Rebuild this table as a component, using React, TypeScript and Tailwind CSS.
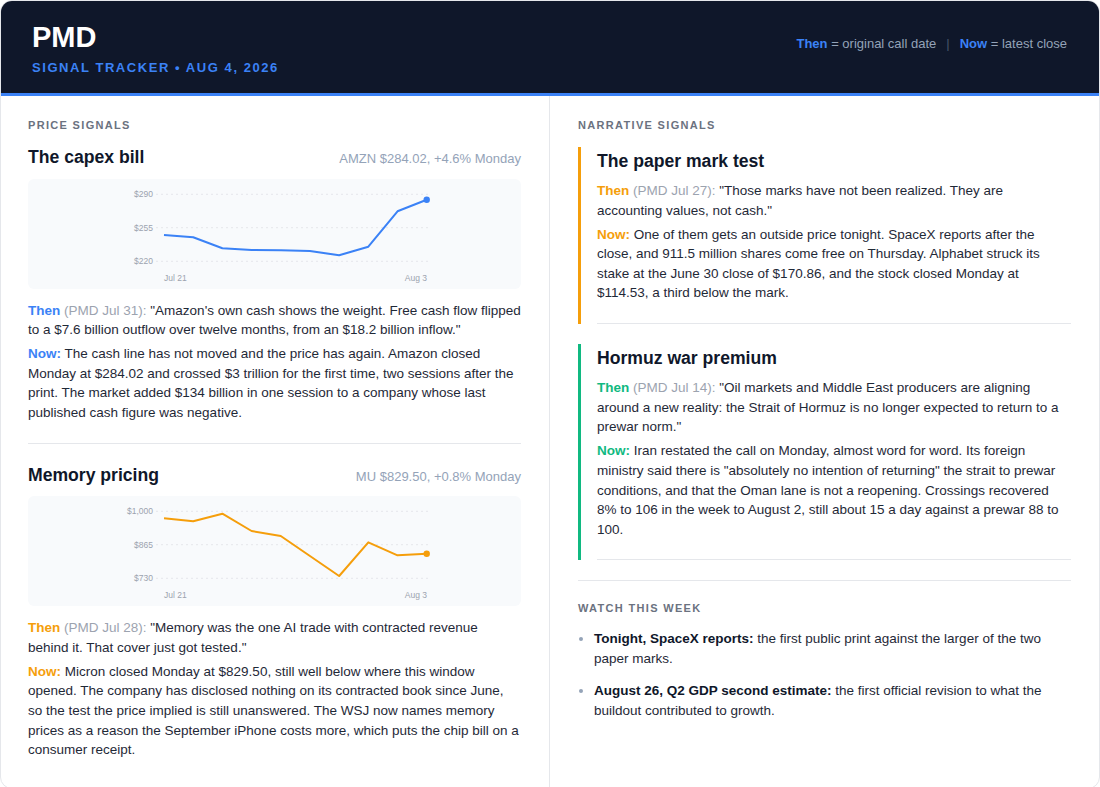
import React from 'react';

type Signal = {
  title: string;
  meta: string;
  color: string;
  thenDate: string;
  thenText: string;
  nowText: string;
  yLabels: string[];
  ys: number[];
};

const price: Signal[] = [
  {
    title: 'The capex bill',
    meta: 'AMZN $284.02, +4.6% Monday',
    color: '#3b82f6',
    thenDate: '(PMD Jul 31):',
    thenText:
      '"Amazon\'s own cash shows the weight. Free cash flow flipped to a $7.6 billion outflow over twelve months, from an $18.2 billion inflow."',
    nowText:
      'The cash line has not moved and the price has again. Amazon closed Monday at $284.02 and crossed $3 trillion for the first time, two sessions after the print. The market added $134 billion in one session to a company whose last published cash figure was negative.',
    yLabels: ['$290', '$255', '$220'],
    ys: [56, 58.3, 69.3, 71, 71.3, 72, 76.3, 67.7, 32.3, 20.7],
  },
  {
    title: 'Memory pricing',
    meta: 'MU $829.50, +0.8% Monday',
    color: '#f59e0b',
    thenDate: '(PMD Jul 28):',
    thenText: '"Memory was the one AI trade with contracted revenue behind it. That cover just got tested."',
    nowText:
      'Micron closed Monday at $829.50, still well below where this window opened. The company has disclosed nothing on its contracted book since June, so the test the price implied is still unanswered. The WSJ now names memory prices as a reason the September iPhone costs more, which puts the chip bill on a consumer receipt.',
    yLabels: ['$1,000', '$865', '$730'],
    ys: [22.3, 25.3, 17.7, 35, 40, 60, 80, 46.3, 59.3, 57.7],
  },
];

const narrative = [
  {
    title: 'The paper mark test',
    color: '#f59e0b',
    border: 'border-[#f59e0b]',
    thenDate: '(PMD Jul 27):',
    thenText: '"Those marks have not been realized. They are accounting values, not cash."',
    nowText:
      'One of them gets an outside price tonight. SpaceX reports after the close, and 911.5 million shares come free on Thursday. Alphabet struck its stake at the June 30 close of $170.86, and the stock closed Monday at $114.53, a third below the mark.',
  },
  {
    title: 'Hormuz war premium',
    color: '#10b981',
    border: 'border-[#10b981]',
    thenDate: '(PMD Jul 14):',
    thenText:
      '"Oil markets and Middle East producers are aligning around a new reality: the Strait of Hormuz is no longer expected to return to a prewar norm."',
    nowText:
      'Iran restated the call on Monday, almost word for word. Its foreign ministry said there is "absolutely no intention of returning" the strait to prewar conditions, and that the Oman lane is not a reopening. Crossings recovered 8% to 106 in the week to August 2, still about 15 a day against a prewar 88 to 100.',
  },
];

function Chart({ ys, color, yLabels }: { ys: number[]; color: string; yLabels: string[] }) {
  const xs = ys.map((_, i) => 136 + i * 29.19);
  const pts = ys.map((y, i) => `${xs[i]},${y}`).join(' ');
  const grid = [15.3, 48.7, 82.3];
  return (
    <div className="mt-2.5 h-[110px] rounded-md bg-[#f8fafc]">
      <svg width="100%" height="110" viewBox="0 0 493 110">
        {grid.map((g, i) => (
          <g key={i}>
            <line x1="128" x2="402" y1={g} y2={g} stroke="#e5e7eb" strokeWidth="1" strokeDasharray="2 3" />
            <text x="125" y={g + 3} textAnchor="end" fontSize="8.5" fill="#9ca3af">
              {yLabels[i]}
            </text>
          </g>
        ))}
        <polyline points={pts} fill="none" stroke={color} strokeWidth="2" strokeLinejoin="round" />
        <circle cx={xs[xs.length - 1]} cy={ys[ys.length - 1]} r="3.2" fill={color} />
        <text x="136" y="102" fontSize="8.5" fill="#9ca3af">Jul 21</text>
        <text x="399" y="102" textAnchor="end" fontSize="8.5" fill="#9ca3af">Aug 3</text>
      </svg>
    </div>
  );
}

function ThenNow({ color, thenDate, thenText, nowText }: { color: string; thenDate: string; thenText: string; nowText: string }) {
  return (
    <div className="text-[13.5px] leading-[19.6px] text-[#1f2937]">
      <p>
        <span className="font-bold" style={{ color }}>Then</span>{' '}
        <span className="text-[#9ca3af]">{thenDate}</span> {thenText}
      </p>
      <p className="mt-[4.5px]">
        <span className="font-bold" style={{ color }}>Now:</span> {nowText}
      </p>
    </div>
  );
}

export default function App() {
  return (
    <div className="min-h-screen bg-white font-['Liberation_Sans',Arial,sans-serif]">
      <div className="overflow-hidden rounded-xl border border-gray-200 bg-white">
        {/* Header */}
        <header className="flex items-start justify-between border-b-[3px] border-[#3b82f6] bg-[#0f172a] pl-[31px] pr-8 pt-5 pb-[17px]">
          <div>
            <h1 className="text-[29px] font-bold leading-[33px] text-white">PMD</h1>
            <p className="mt-1.5 text-[13px] font-bold uppercase leading-4 tracking-[0.12em] text-[#3b82f6]">
              Signal Tracker • Aug 4, 2026
            </p>
          </div>
          <p className="mt-[13px] text-[13px] leading-5 text-[#94a3b8]">
            <span className="font-bold text-[#3b82f6]">Then</span> = original call date
            <span className="mx-2.5 text-[#475569]">|</span>
            <span className="font-bold text-[#3b82f6]">Now</span> = latest close
          </p>
        </header>

        <div className="grid grid-cols-2">
          {/* Price signals */}
          <section className="border-r border-gray-200 pl-[27px] pr-7 pt-[21px] pb-7">
            <h2 className="mb-[13px] text-[11px] font-bold uppercase leading-4 tracking-[0.12em] text-[#6b7280]">
              Price Signals
            </h2>
            {price.map((s, i) => (
              <div key={s.title} className={i === 0 ? 'border-b border-gray-200 pb-5' : 'pt-5'}>
                <div className="flex items-baseline justify-between">
                  <h3 className="text-[17.6px] font-bold leading-[22px] text-[#0f172a]">{s.title}</h3>
                  <span className="text-[13px] text-[#94a3b8]">{s.meta}</span>
                </div>
                <Chart ys={s.ys} color={s.color} yLabels={s.yLabels} />
                <div className="mt-3">
                  <ThenNow color={s.color} thenDate={s.thenDate} thenText={s.thenText} nowText={s.nowText} />
                </div>
              </div>
            ))}
          </section>

          {/* Narrative signals */}
          <section className="px-7 pt-[21px] pb-7">
            <h2 className="text-[11px] font-bold uppercase leading-4 tracking-[0.12em] text-[#6b7280]">
              Narrative Signals
            </h2>
            <div className="mt-3.5 flex flex-col gap-5">
              {narrative.map((n) => (
                <div key={n.title} className={`border-l-[3px] pl-4 ${n.border}`}>
                  <div className="border-b border-gray-200 pt-[3px] pb-5">
                    <h3 className="mb-[9px] text-[17.6px] font-bold leading-[22px] text-[#0f172a]">{n.title}</h3>
                    <ThenNow color={n.color} thenDate={n.thenDate} thenText={n.thenText} nowText={n.nowText} />
                  </div>
                </div>
              ))}
            </div>

            <div className="mt-5 border-t border-gray-200 pt-[19px]">
              <h2 className="text-[11px] font-bold uppercase leading-4 tracking-[0.12em] text-[#6b7280]">
                Watch This Week
              </h2>
              <ul className="mt-[13px] flex flex-col gap-3 text-[13.5px] leading-5 text-[#1f2937]">
                <li className="flex">
                  <span className="mt-2 ml-[1px] mr-[11px] h-1 w-1 shrink-0 rounded-full bg-[#94a3b8]" />
                  <span>
                    <b className="text-[#0f172a]">Tonight, SpaceX reports:</b> the first public print against the larger of the two paper marks.
                  </span>
                </li>
                <li className="flex">
                  <span className="mt-2 ml-[1px] mr-[11px] h-1 w-1 shrink-0 rounded-full bg-[#94a3b8]" />
                  <span>
                    <b className="text-[#0f172a]">August 26, Q2 GDP second estimate:</b> the first official revision to what the buildout contributed to growth.
                  </span>
                </li>
              </ul>
            </div>
          </section>
        </div>
      </div>
    </div>
  );
}
